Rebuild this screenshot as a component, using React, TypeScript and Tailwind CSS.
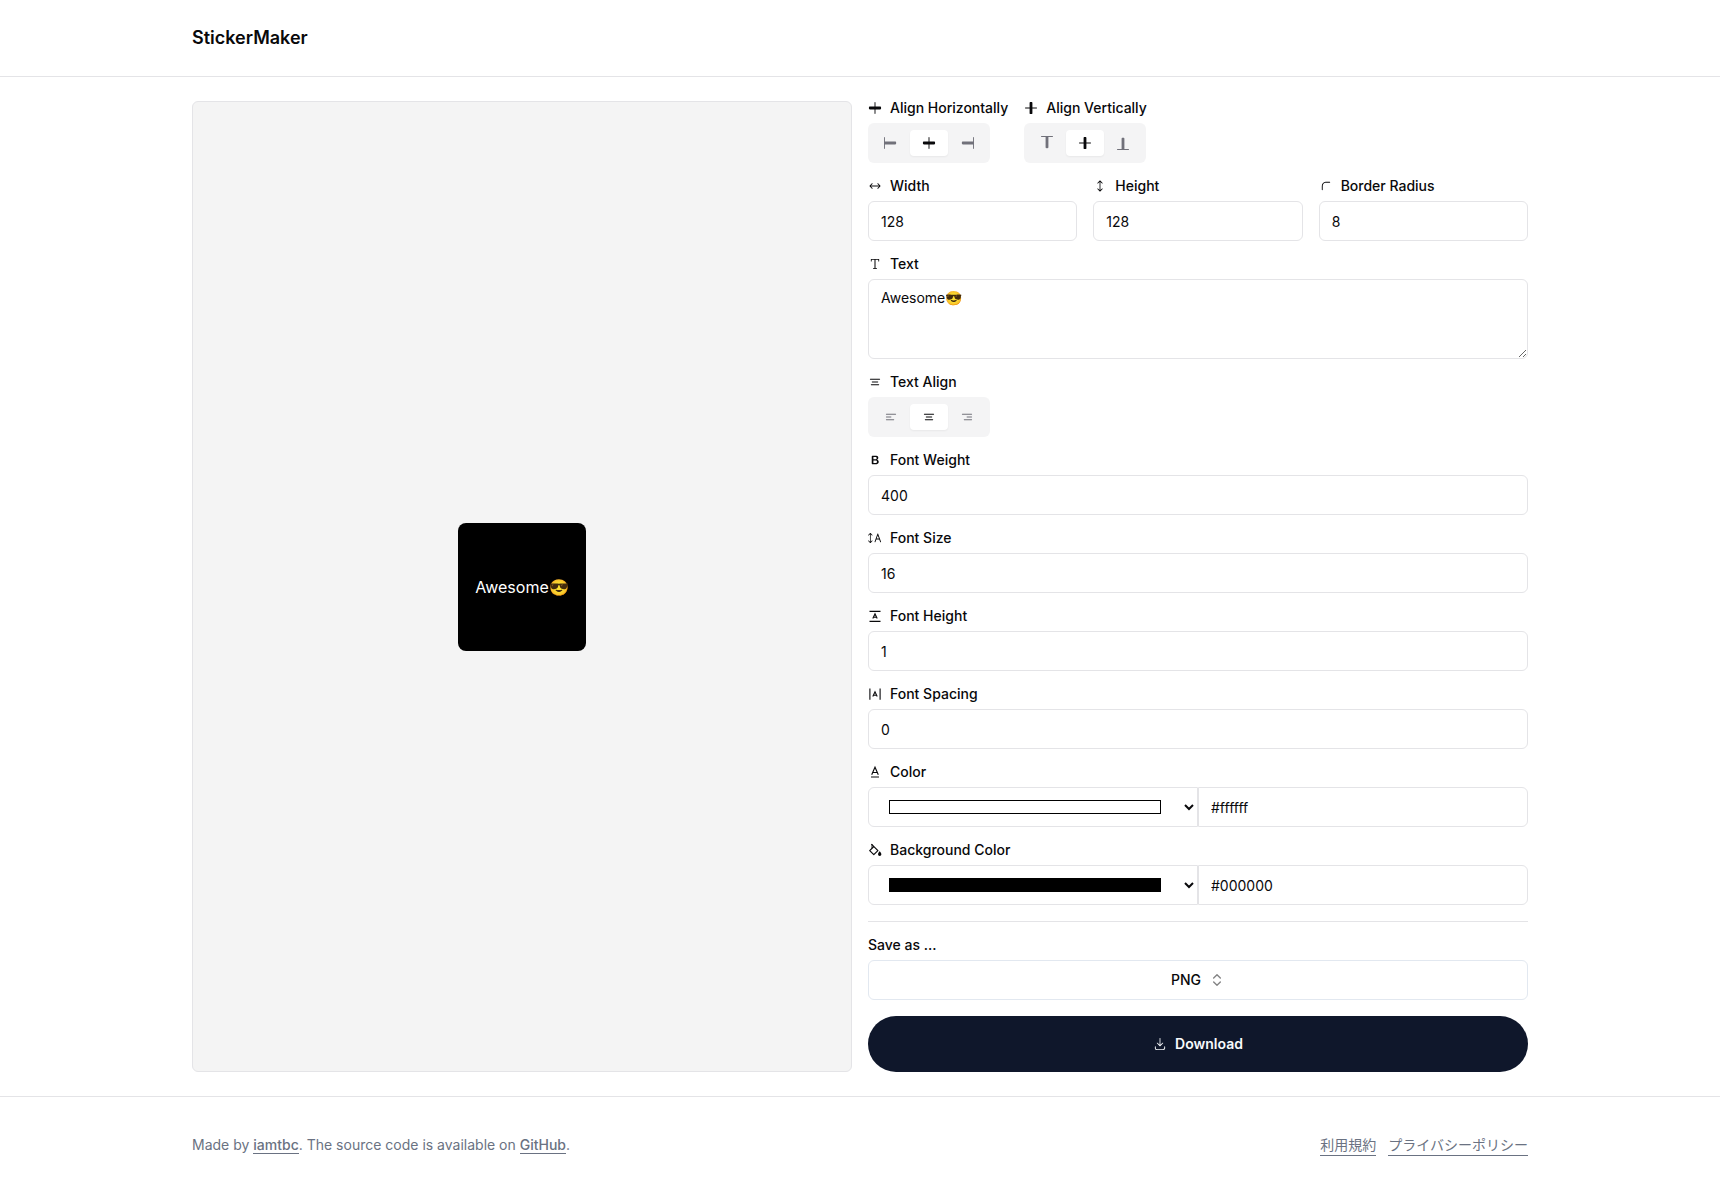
import { useState } from "react";
import type { ComponentType, ReactNode } from "react";
import {
  RxAlignBottom,
  RxAlignCenterHorizontally,
  RxAlignCenterVertically,
  RxAlignLeft,
  RxAlignRight,
  RxAlignTop,
  RxCornerTopLeft,
  RxDownload,
  RxFontBold,
  RxFontSize,
  RxHeight,
  RxText,
  RxTextAlignCenter,
  RxTextAlignLeft,
  RxTextAlignRight,
  RxWidth,
} from "react-icons/rx";
import { ChevronsUpDown } from "lucide-react";

type Icon = ComponentType<{ className?: string }>;

const inputClass =
  "h-10 w-full min-w-0 rounded-md border border-[#e4e4e7] bg-white px-3 py-2 text-sm text-[#09090b]";

function LineHeightIcon({ className }: { className?: string }) {
  return (
    <svg viewBox="0 0 14 14" fill="none" stroke="currentColor" className={className} aria-hidden="true">
      <path d="M1.5 2.4h11M1.5 12.4h11" strokeWidth="1.1" />
      <path d="M4.8 9.6 7 4.9l2.2 4.7M5.6 8.3h2.8" strokeWidth="1.1" />
    </svg>
  );
}

function LetterSpacingIcon({ className }: { className?: string }) {
  return (
    <svg viewBox="0 0 14 14" fill="none" stroke="currentColor" className={className} aria-hidden="true">
      <path d="M1.9 1.5v11.3M12.1 1.5v11.3" strokeWidth="1.1" />
      <path d="M4.8 9.5 7 4.8l2.2 4.7M5.6 8.2h2.8" strokeWidth="1.1" />
    </svg>
  );
}

function TextColorIcon({ className }: { className?: string }) {
  return (
    <svg viewBox="0 0 14 14" fill="none" stroke="currentColor" className={className} aria-hidden="true">
      <path d="M3.7 9.8 7 2.2l3.3 7.6M4.8 7.5h4.4" strokeWidth="1.1" />
      <path d="M3 12h8" strokeWidth="1" />
    </svg>
  );
}

function PaintBucketIcon({ className }: { className?: string }) {
  return (
    <svg viewBox="0 0 14 14" fill="none" stroke="currentColor" className={className} aria-hidden="true">
      <path d="M3.4 1.1 9.9 7.6 5.8 11.7 1.7 7.6 5.8 3.5" strokeWidth="1.2" strokeLinejoin="round" />
      <path d="M4 1.2v4" strokeWidth="0.9" />
      <path d="M11.7 8.3s-1.7 1.8-1.7 2.9a1.7 1.7 0 0 0 3.4 0c0-1.1-1.7-2.9-1.7-2.9Z" fill="currentColor" stroke="none" />
    </svg>
  );
}

function LabelRow({ icon: Icon, text, htmlFor }: { icon: Icon; text: string; htmlFor: string }) {
  return (
    <label htmlFor={htmlFor} className="flex items-center gap-2 text-sm leading-none font-medium">
      <Icon className="size-[14px] shrink-0" />
      {text}
    </label>
  );
}

function Field({ icon, text, id, children }: { icon: Icon; text: string; id: string; children: ReactNode }) {
  return (
    <div className="flex min-w-0 flex-col gap-2">
      <LabelRow icon={icon} text={text} htmlFor={id} />
      {children}
    </div>
  );
}

function Toggle({ id, label, options }: { id: string; label: string; options: { name: string; icon: Icon }[] }) {
  const [active, setActive] = useState(1);
  return (
    <div
      role="group"
      aria-label={label}
      className="flex h-10 items-center self-start rounded-md bg-[#f4f4f5] p-1 text-[#71717a]"
    >
      {options.map(({ name, icon: Icon }, i) => (
        <button
          key={name}
          id={i === 1 ? id : undefined}
          type="button"
          aria-label={name}
          aria-pressed={i === active}
          onClick={() => setActive(i)}
          className={
            i === active
              ? "rounded-sm bg-white px-3 py-1.5 text-[#09090b] shadow-xs"
              : "rounded-sm px-3 py-1.5"
          }
        >
          <Icon className="size-[14px]" />
        </button>
      ))}
    </div>
  );
}

function TextField(props: { icon: Icon; text: string; id: string; value: string }) {
  return (
    <Field icon={props.icon} text={props.text} id={props.id}>
      <input id={props.id} className={inputClass} defaultValue={props.value} />
    </Field>
  );
}

function ColorField(props: {
  icon: Icon;
  text: string;
  id: string;
  value: string;
  onChange: (v: string) => void;
}) {
  return (
    <Field icon={props.icon} text={props.text} id={props.id}>
      <div className="grid grid-cols-2">
        <div className="relative">
          <input
            id={props.id}
            type="color"
            value={props.value}
            onChange={(e) => props.onChange(e.target.value)}
            className="block h-10 w-full rounded-l-md border border-[#e4e4e7] bg-white py-2 pr-9 pl-5 text-sm [&::-webkit-color-swatch]:rounded-none [&::-webkit-color-swatch]:border-black [&::-webkit-color-swatch-wrapper]:px-0 [&::-webkit-color-swatch-wrapper]:py-1"
          />
          <svg
            viewBox="0 0 10 8"
            fill="none"
            stroke="currentColor"
            strokeWidth="2"
            className="pointer-events-none absolute top-4 right-1 h-2 w-[10px]"
            aria-hidden="true"
          >
            <path d="M1 2l4 4 4-4" />
          </svg>
        </div>
        <input
          aria-label={props.text + " value"}
          value={props.value}
          onChange={(e) => props.onChange(e.target.value)}
          className="h-10 w-full rounded-r-md border border-[#e4e4e7] bg-white px-3 py-2 text-sm"
        />
      </div>
    </Field>
  );
}

export default function App() {
  const [text, setText] = useState("Awesome😎");
  const [color, setColor] = useState("#ffffff");
  const [background, setBackground] = useState("#000000");

  return (
    <div className="flex min-h-screen flex-col bg-white font-['Inter','Noto_Sans_CJK_JP',sans-serif] text-[#09090b]">
      <header className="border-b border-[#e4e4e7]">
        <div className="mx-auto flex h-19 max-w-[1400px] items-center px-8">
          <h1 className="text-lg font-semibold">StickerMaker</h1>
        </div>
      </header>

      <main className="mx-auto grid w-full max-w-[1400px] flex-1 grid-cols-2 gap-4 px-8 py-6">
        <section
          aria-label="Preview"
          className="flex items-center justify-center rounded-md border border-[#e4e4e7] bg-[#f4f4f4]"
        >
          <div
            className="flex size-32 items-center justify-center rounded-lg text-base leading-none whitespace-pre"
            style={{ color, backgroundColor: background }}
          >
            {text}
          </div>
        </section>

        <form className="flex flex-col gap-4" onSubmit={(e) => e.preventDefault()}>
          <div className="flex gap-4">
            <Field icon={RxAlignCenterHorizontally} text="Align Horizontally" id="align-h">
              <Toggle
                id="align-h"
                label="Align Horizontally"
                options={[
                  { name: "Left", icon: RxAlignLeft },
                  { name: "Center", icon: RxAlignCenterHorizontally },
                  { name: "Right", icon: RxAlignRight },
                ]}
              />
            </Field>
            <Field icon={RxAlignCenterVertically} text="Align Vertically" id="align-v">
              <Toggle
                id="align-v"
                label="Align Vertically"
                options={[
                  { name: "Top", icon: RxAlignTop },
                  { name: "Middle", icon: RxAlignCenterVertically },
                  { name: "Bottom", icon: RxAlignBottom },
                ]}
              />
            </Field>
          </div>

          <div className="grid grid-cols-3 gap-4">
            <TextField icon={RxWidth} text="Width" id="width" value="128" />
            <TextField icon={RxHeight} text="Height" id="height" value="128" />
            <TextField icon={RxCornerTopLeft} text="Border Radius" id="radius" value="8" />
          </div>

          <Field icon={RxText} text="Text" id="text">
            <textarea
              id="text"
              value={text}
              onChange={(e) => setText(e.target.value)}
              className="block h-20 w-full rounded-md border border-[#e4e4e7] bg-white px-3 py-2 text-sm"
            />
          </Field>

          <Field icon={RxTextAlignCenter} text="Text Align" id="text-align">
            <Toggle
              id="text-align"
              label="Text Align"
              options={[
                { name: "Left", icon: RxTextAlignLeft },
                { name: "Center", icon: RxTextAlignCenter },
                { name: "Right", icon: RxTextAlignRight },
              ]}
            />
          </Field>

          <TextField icon={RxFontBold} text="Font Weight" id="weight" value="400" />
          <TextField icon={RxFontSize} text="Font Size" id="size" value="16" />
          <TextField icon={LineHeightIcon} text="Font Height" id="line-height" value="1" />
          <TextField icon={LetterSpacingIcon} text="Font Spacing" id="spacing" value="0" />
          <ColorField icon={TextColorIcon} text="Color" id="color" value={color} onChange={setColor} />
          <ColorField
            icon={PaintBucketIcon}
            text="Background Color"
            id="background"
            value={background}
            onChange={setBackground}
          />

          <hr className="border-[#e4e4e7]" />

          <div className="flex flex-col gap-2">
            <label htmlFor="format" className="text-sm leading-none font-medium">
              Save as ...
            </label>
            <button
              id="format"
              type="button"
              className="flex h-10 items-center justify-center gap-2 rounded-md border border-slate-200 bg-white text-sm font-medium"
            >
              PNG
              <ChevronsUpDown className="size-4 opacity-50" />
            </button>
          </div>

          <button
            type="submit"
            className="flex h-14 items-center justify-center gap-2 rounded-full bg-slate-900 text-sm font-semibold text-slate-50"
          >
            <RxDownload className="size-[14px]" />
            Download
          </button>
        </form>
      </main>

      <footer className="border-t border-[#e4e4e7] text-sm text-gray-500">
        <div className="mx-auto flex h-24 max-w-[1400px] items-center justify-between px-8">
          <p>
            Made by{" "}
            <a href="#author" className="border-b border-gray-500 font-medium">
              iamtbc
            </a>
            . The source code is available on{" "}
            <a href="#source" className="border-b border-gray-500 font-medium">
              GitHub
            </a>
            .
          </p>
          <nav className="flex gap-3">
            <a href="#terms" className="border-b border-gray-500">
              利用規約
            </a>
            <a href="#privacy" className="border-b border-gray-500">
              プライバシーポリシー
            </a>
          </nav>
        </div>
      </footer>
    </div>
  );
}
